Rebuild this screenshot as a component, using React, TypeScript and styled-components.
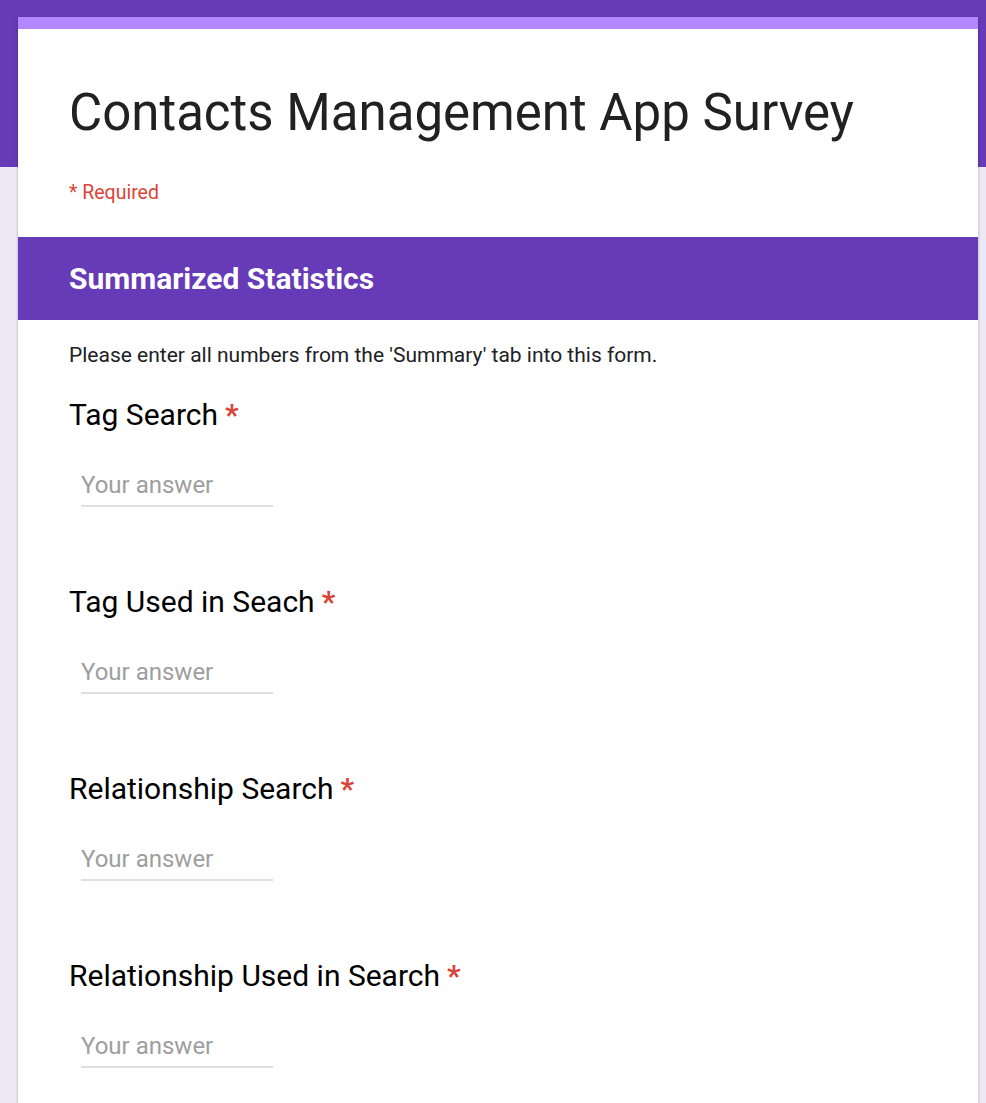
import React from 'react'
import styled, { createGlobalStyle } from 'styled-components'

const GlobalStyle = createGlobalStyle`
  html, body {
    margin: 0;
    padding: 0;
    background: #ede7f6;
    font-family: Roboto, "Liberation Sans", Arial, sans-serif;
  }
`

const Page = styled.div`
  height: 1103px;
  overflow: hidden;
  background: linear-gradient(#673ab7 0, #673ab7 167px, #ede7f6 167px);
  padding: 17px 8px 0 18px;
  box-sizing: border-box;
`

const Card = styled.div`
  width: 960px;
  background: #fff;
  box-shadow: 0 1px 3px rgba(0, 0, 0, 0.25);
  border-top: 12px solid #b388ff;
`

const Header = styled.div`
  padding: 52px 51px 33px;
`

const Title = styled.h1`
  margin: 0;
  font-size: 51px;
  font-weight: 400;
  line-height: 64px;
  color: #212121;
`

const Required = styled.div`
  margin-top: 36px;
  font-size: 19.5px;
  color: #db4437;
`

const Section = styled.div`
  background: #673ab7;
  height: 83px;
  padding: 0 51px;
  display: flex;
  align-items: center;
  color: #fff;
  font-size: 30px;
  font-weight: 700;
`

const Body = styled.div`
  padding: 21px 51px 0;
`

const Description = styled.div`
  font-size: 21px;
  color: #202124;
  line-height: 28px;
`

const Question = styled.div`
  padding-top: 28px;
  height: 159px;
`

const Label = styled.div`
  font-size: 30px;
  color: #000;
  line-height: 36px;
`

const Star = styled.span`
  color: #db4437;
  font-weight: 700;
  margin-left: 7px;
`

const Answer = styled.div`
  margin: 38px 0 0 12px;
  width: 192px;
  padding-bottom: 6px;
  border-bottom: 2px solid #e0e0e0;
  font-size: 24px;
  line-height: 28px;
  color: #9e9e9e;
`

const questions = ['Tag Search', 'Tag Used in Seach', 'Relationship Search', 'Relationship Used in Search']

export default function App() {
  return (
    <Page>
      <GlobalStyle />
      <Card>
        <Header>
          <Title>Contacts Management App Survey</Title>
          <Required>* Required</Required>
        </Header>
        <Section>Summarized Statistics</Section>
        <Body>
          <Description>Please enter all numbers from the 'Summary' tab into this form.</Description>
          {questions.map((q) => (
            <Question key={q}>
              <Label>
                {q}
                <Star>*</Star>
              </Label>
              <Answer>Your answer</Answer>
            </Question>
          ))}
        </Body>
      </Card>
    </Page>
  )
}
